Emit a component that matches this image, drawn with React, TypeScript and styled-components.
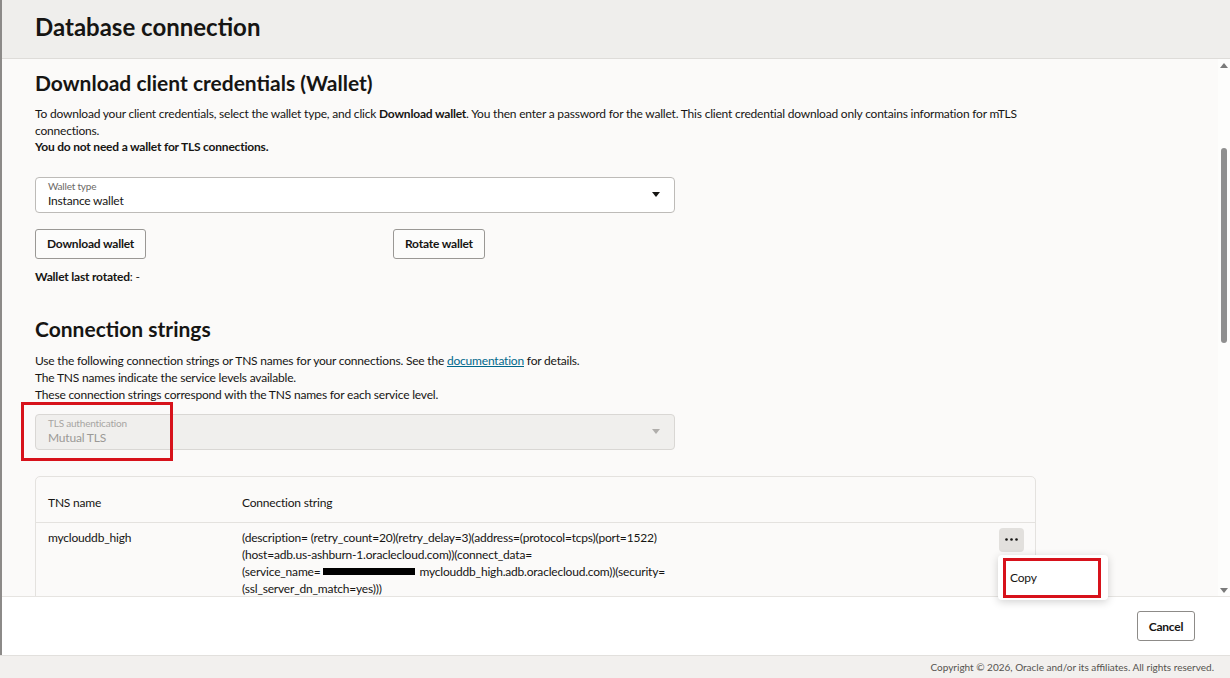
import styled, { createGlobalStyle } from 'styled-components';

const GlobalStyle = createGlobalStyle`
  html, body {
    margin: 0;
    padding: 0;
    height: 100%;
    overflow: hidden;
  }
  body {
    font-family: Lato, "Liberation Sans", sans-serif;
    color: #161513;
  }
`;

const Page = styled.div`
  position: relative;
  width: 1230px;
  height: 678px;
  display: flex;
  flex-direction: column;
  background: #f2f0ee;
`;

const Panel = styled.div`
  flex: 1;
  display: flex;
  flex-direction: column;
  border-left: 2px solid #8c8a88;
  min-height: 0;
`;

const Header = styled.header`
  height: 59px;
  flex-shrink: 0;
  display: flex;
  align-items: center;
  padding: 0 0 6px 33px;
  box-sizing: border-box;
  background: #efeeec;
  border-bottom: 1px solid #dedcd9;
`;

const Title = styled.h1`
  margin: 0;
  font-size: 24px;
  font-weight: 700;
`;

const Body = styled.div`
  flex: 1;
  display: flex;
  min-height: 0;
  overflow: hidden;
  background: #fbfaf9;
`;

const Content = styled.div`
  flex: 1;
  padding: 10px 0 0 33px;
  font-size: 12px;
  letter-spacing: -0.2px;
`;

const SectionTitle = styled.h2<{ $top?: number }>`
  margin: ${(p) => p.$top ?? 0}px 0 9px;
  font-size: 21px;
  line-height: 28px;
  font-weight: 700;
  letter-spacing: 0;
`;

const Para = styled.p<{ $lh: number }>`
  margin: 0;
  line-height: ${(p) => p.$lh}px;
`;

const Line = styled.span`
  display: block;
  white-space: nowrap;
`;

const Link = styled.a`
  color: #00688c;
  text-decoration: underline;
`;

const SelectWrap = styled.div<{ $top: number }>`
  position: relative;
  width: 640px;
  margin-top: ${(p) => p.$top}px;
`;

const Select = styled.div<{ $disabled?: boolean }>`
  height: 36px;
  box-sizing: border-box;
  display: flex;
  align-items: center;
  padding: 0 14px 0 12px;
  border: 1px solid ${(p) => (p.$disabled ? '#d9d7d4' : '#bdbbb8')};
  border-radius: 4px;
  background: ${(p) => (p.$disabled ? '#f0efed' : '#ffffff')};
  color: ${(p) => (p.$disabled ? '#9b9996' : '#161513')};
`;

const SelectText = styled.div`
  flex: 1;
  display: flex;
  flex-direction: column;
`;

const SelectLabel = styled.span<{ $disabled?: boolean }>`
  font-size: 10px;
  line-height: 13px;
  color: ${(p) => (p.$disabled ? '#a7a5a2' : '#6b6966')};
`;

const SelectValue = styled.span`
  font-size: 12px;
  line-height: 16px;
`;

const Caret = styled.svg<{ $disabled?: boolean }>`
  width: 8px;
  height: 5px;
  fill: ${(p) => (p.$disabled ? '#b0aeab' : '#161513')};
`;

const ButtonRow = styled.div`
  display: grid;
  grid-template-columns: 358px auto;
  justify-items: start;
  margin-top: 16px;
`;

const Button = styled.button`
  height: 30px;
  padding: 0 11px;
  font-family: inherit;
  font-size: 12px;
  font-weight: 700;
  letter-spacing: -0.2px;
  color: #161513;
  background: #fcfcfb;
  border: 1px solid #9a9895;
  border-radius: 3px;
`;

const Meta = styled.div`
  margin-top: 10px;
  line-height: 16px;
`;

const Highlight = styled.div<{ $l: number; $t: number; $w: number; $h: number }>`
  position: absolute;
  left: ${(p) => p.$l}px;
  top: ${(p) => p.$t}px;
  width: ${(p) => p.$w}px;
  height: ${(p) => p.$h}px;
  box-sizing: border-box;
  border: 3px solid #d7121b;
  pointer-events: none;
`;

const Table = styled.div`
  width: 999px;
  margin-top: 26px;
  border: 1px solid #e4e2df;
  border-radius: 5px 5px 0 0;
`;

const Row = styled.div<{ $head?: boolean }>`
  display: grid;
  grid-template-columns: 194px 1fr 40px;
  align-items: start;
  padding: ${(p) => (p.$head ? '17px 0 11px' : '5px 0 0')};
  border-bottom: ${(p) => (p.$head ? '1px solid #e4e2df' : 'none')};
  line-height: 17px;
`;

const Cell = styled.div<{ $pad?: number }>`
  padding: ${(p) => p.$pad ?? 0}px 0 0 12px;
`;

const ActionCell = styled.div`
  display: flex;
  justify-content: flex-end;
  padding-right: 11px;
`;

const Redacted = styled.span`
  display: inline-block;
  width: 92px;
  height: 7px;
  margin: 0 4px 0 3px;
  vertical-align: 1px;
  background: #000;
`;

const DotsButton = styled.div`
  width: 25px;
  height: 24px;
  flex-shrink: 0;
  border-radius: 4px;
  background: #e2e0dd;
  display: flex;
  align-items: center;
  justify-content: center;
`;

const Scrollbar = styled.div`
  width: 12px;
  flex-shrink: 0;
  display: flex;
  flex-direction: column;
  align-items: center;
  padding: 4px 0 3px;
  background: #fdfdfc;
`;

const Arrow = styled.svg`
  width: 8px;
  height: 5px;
  fill: #7a7a7a;
`;

const Thumb = styled.div`
  width: 6px;
  height: 195px;
  margin-top: 80px;
  border-radius: 3px;
  background: #8f8f8f;
`;

const Spacer = styled.div`
  flex: 1;
`;

const Footer = styled.footer`
  height: 59px;
  flex-shrink: 0;
  display: flex;
  align-items: center;
  justify-content: flex-end;
  padding: 0 35px 0 0;
  box-sizing: border-box;
  background: #ffffff;
  border-top: 1px solid #e6e4e1;
`;

const CancelButton = styled(Button)`
  width: 58px;
  padding: 0;
  border-color: #8d8b88;
  background: #ffffff;
`;

const BottomBar = styled.div`
  height: 23px;
  flex-shrink: 0;
  display: flex;
  align-items: center;
  justify-content: flex-end;
  padding-right: 16px;
  font-size: 10px;
  color: #55534f;
  border-top: 1px solid #e2e0dd;
  box-sizing: border-box;
`;

const Menu = styled.div`
  position: absolute;
  left: 998px;
  top: 555px;
  width: 110px;
  height: 45px;
  box-sizing: border-box;
  background: #ffffff;
  border-radius: 4px;
  box-shadow: 0 2px 8px rgba(0, 0, 0, 0.18);
  display: flex;
  align-items: center;
  padding: 0 0 0 12px;
  font-size: 12px;
  letter-spacing: -0.2px;
`;

const CaretIcon = ({ disabled }: { disabled?: boolean }) => (
  <Caret $disabled={disabled} viewBox="0 0 8 5">
    <path d="M0 0h8L4 5z" />
  </Caret>
);

const App = () => {
  return (
    <Page>
      <GlobalStyle />
      <Panel>
        <Header>
          <Title>Database connection</Title>
        </Header>
        <Body>
          <Content>
            <SectionTitle>Download client credentials (Wallet)</SectionTitle>
            <Para $lh={16.5}>
              <Line>
                To download your client credentials, select the wallet type, and click <b>Download wallet</b>. You
                then enter a password for the wallet. This client credential download only contains information for
                mTLS
              </Line>
              <Line>connections.</Line>
              <Line>
                <b>You do not need a wallet for TLS connections.</b>
              </Line>
            </Para>

            <SelectWrap $top={21}>
              <Select>
                <SelectText>
                  <SelectLabel>Wallet type</SelectLabel>
                  <SelectValue>Instance wallet</SelectValue>
                </SelectText>
                <CaretIcon />
              </Select>
            </SelectWrap>

            <ButtonRow>
              <Button>Download wallet</Button>
              <Button>Rotate wallet</Button>
            </ButtonRow>

            <Meta>
              <b>Wallet last rotated</b>: -
            </Meta>

            <SectionTitle $top={30}>Connection strings</SectionTitle>
            <Para $lh={17}>
              <Line>
                Use the following connection strings or TNS names for your connections. See the{' '}
                <Link href="#">documentation</Link> for details.
              </Line>
              <Line>The TNS names indicate the service levels available.</Line>
              <Line>These connection strings correspond with the TNS names for each service level.</Line>
            </Para>

            <SelectWrap $top={11}>
              <Select $disabled>
                <SelectText>
                  <SelectLabel $disabled>TLS authentication</SelectLabel>
                  <SelectValue>Mutual TLS</SelectValue>
                </SelectText>
                <CaretIcon disabled />
              </Select>
              <Highlight $l={-14} $t={-12} $w={152} $h={59} />
            </SelectWrap>

            <Table>
              <Row $head>
                <Cell>TNS name</Cell>
                <Cell>Connection string</Cell>
                <div />
              </Row>
              <Row>
                <Cell $pad={1}>myclouddb_high</Cell>
                <Cell $pad={1}>
                  <Line>(description= (retry_count=20)(retry_delay=3)(address=(protocol=tcps)(port=1522)</Line>
                  <Line>(host=adb.us-ashburn-1.oraclecloud.com))(connect_data=</Line>
                  <Line>
                    (service_name=
                    <Redacted />
                    myclouddb_high.adb.oraclecloud.com))(security=
                  </Line>
                  <Line>(ssl_server_dn_match=yes)))</Line>
                </Cell>
                <ActionCell>
                  <DotsButton>
                    <svg width="13" height="3" viewBox="0 0 13 3" fill="#161513">
                      <circle cx="1.5" cy="1.5" r="1.3" />
                      <circle cx="6.5" cy="1.5" r="1.3" />
                      <circle cx="11.5" cy="1.5" r="1.3" />
                    </svg>
                  </DotsButton>
                </ActionCell>
              </Row>
            </Table>
          </Content>

          <Scrollbar>
            <Arrow viewBox="0 0 8 5">
              <path d="M0 5h8L4 0z" />
            </Arrow>
            <Thumb />
            <Spacer />
            <Arrow viewBox="0 0 8 5">
              <path d="M0 0h8L4 5z" />
            </Arrow>
          </Scrollbar>
        </Body>
        <Footer>
          <CancelButton>Cancel</CancelButton>
        </Footer>
      </Panel>
      <BottomBar>Copyright © 2026, Oracle and/or its affiliates. All rights reserved.</BottomBar>

      <Menu>
        Copy
        <Highlight $l={5} $t={3} $w={98} $h={40} />
      </Menu>
    </Page>
  );
};

export default App;
